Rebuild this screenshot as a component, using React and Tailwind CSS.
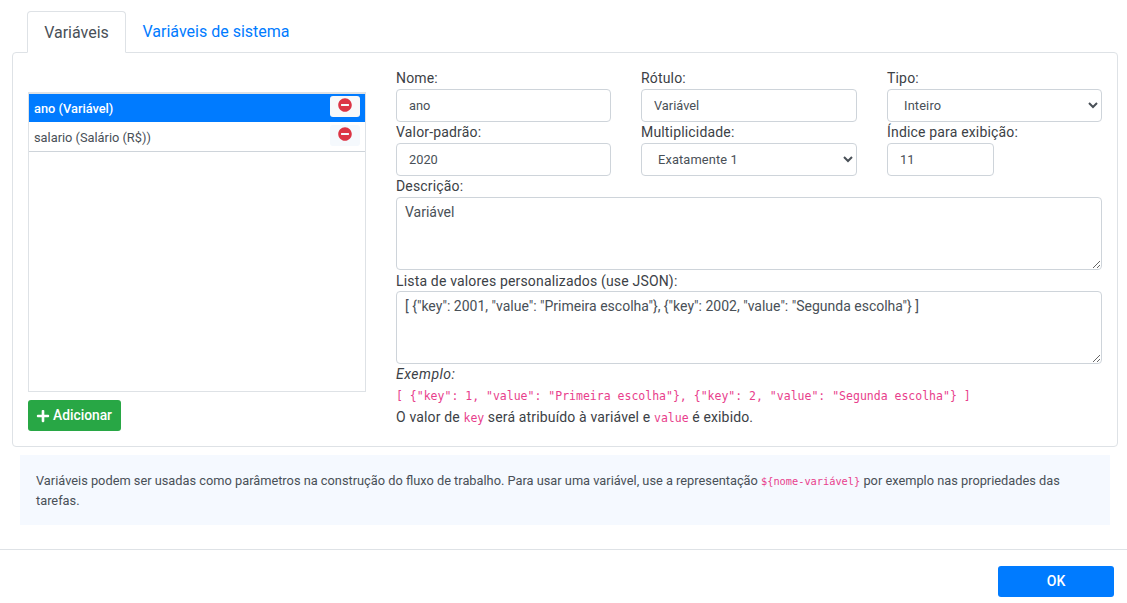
import React from "react";
import { FaMinusCircle, FaPlus } from "react-icons/fa";

const labelCls = "block h-[21px] text-[14px] leading-[21px] tracking-[0.17px] text-[#3c4146]";
const inputCls = "block w-full h-[33px] border border-[#ced4da] rounded-[4px] bg-white pl-[12px] pr-2 text-[12.8px] text-[#495057] outline-none";
const selectCls = "block w-full h-[33px] border border-[#ced4da] rounded-[4px] bg-white pl-3 pr-1 text-[12.8px] tracking-[0.15px] text-[#495057] outline-none";
const taCls = "block w-full h-[73px] border border-[#ced4da] rounded-[4px] bg-white px-2 py-[4px] text-[14px] leading-[21px] text-[#495057] outline-none resize-y";
const mono = "font-['DejaVu_Sans_Mono',monospace] text-[11.5px] tracking-normal text-[#e83e8c]";

function Row({ text, active }) {
  return (
    <div className={`flex items-start justify-between pl-[5px] pr-[5px] ${active ? "h-[28px] bg-[#007bff] text-white font-medium" : "h-[29px] text-[#495057]"}`}>
      <span className={`text-[12.8px] ${active ? "leading-[30px]" : "leading-[32px]"}`}>{text}</span>
      <span className={`flex justify-center w-[30px] h-[21px] rounded-[3px] pt-[2px] ${active ? "mt-[2px] bg-[#f8f9fa]" : "mt-[3px] bg-[#f5f9fd]"}`}>
        <FaMinusCircle className="text-[#dc3545] text-[14px]" />
      </span>
    </div>
  );
}

export default function App() {
  return (
    <div className="w-[1127px] h-[603px] bg-white font-['Roboto',sans-serif] text-[#3c4146] overflow-hidden pt-[11px]">
      <div className="flex pl-[27px] h-[42px] relative z-10">
        <div className="w-[99px] h-[42px] border border-[#dee2e6] border-b-white bg-white rounded-t-[4px] text-[#495057] text-[16px] leading-[42px] text-center">Variáveis</div>
        <div className="w-[180px] h-[42px] text-[#007bff] text-[16px] leading-[42px] text-center">Variáveis de sistema</div>
      </div>
      <div className="mx-[12px] -mt-[1px] h-[395px] w-[1106px] border border-[#dee2e6] rounded-[4px] flex pl-[15px] pr-[15px]">
        <div className="w-[338px] pt-[39px] shrink-0">
          <div className="h-[300px] border border-[#dee2e6] border-t-2">
            <div className="border-b border-[#ced4da] h-[58px]">
              <Row text="ano (Variável)" active />
              <Row text="salario (Salário (R$))" />
            </div>
          </div>
          <button className="mt-[8px] flex items-center gap-[3px] h-[31px] w-[93px] bg-[#28a745] rounded-[3px] text-white text-[13.8px] font-medium pl-[8px]">
            <FaPlus className="text-[14px]" />
            <span className="leading-none">Adicionar</span>
          </button>
        </div>
        <div className="ml-[30px] w-[706px] pt-[15px]">
          <div className="grid grid-cols-[215px_216px_215px] gap-x-[30px]">
            <div>
              <label className={labelCls}>Nome:</label>
              <input className={inputCls} defaultValue="ano" />
            </div>
            <div>
              <label className={labelCls}>Rótulo:</label>
              <input className={inputCls} defaultValue="Variável" />
            </div>
            <div>
              <label className={labelCls}>Tipo:</label>
              <select className={selectCls} defaultValue="Inteiro"><option>Inteiro</option></select>
            </div>
            <div>
              <label className={labelCls}>Valor-padrão:</label>
              <input className={inputCls} defaultValue="2020" />
            </div>
            <div>
              <label className={labelCls}>Multiplicidade:</label>
              <select className={selectCls} defaultValue="Exatamente 1"><option>Exatamente 1</option></select>
            </div>
            <div>
              <label className={labelCls}>Índice para exibição:</label>
              <input className={`${inputCls} !w-[107px]`} defaultValue="11" />
            </div>
          </div>
          <label className={labelCls}>Descrição:</label>
          <textarea className={taCls} defaultValue="Variável" />
          <label className={`${labelCls} !leading-[23px]`}>Lista de valores personalizados (use JSON):</label>
          <textarea className={taCls} defaultValue={'[ {"key": 2001, "value": "Primeira escolha"}, {"key": 2002, "value": "Segunda escolha"} ]'} />
          <div className="h-[21px] text-[14px] leading-[21px] italic tracking-[0.5px]">Exemplo:</div>
          <div className={`${mono} h-[22px] leading-[22px]`}>{'[ {"key": 1, "value": "Primeira escolha"}, {"key": 2, "value": "Segunda escolha"} ]'}</div>
          <div className="h-[21px] text-[14px] leading-[21px] tracking-[0.15px]">
            O valor de <code className={mono}>key</code> será atribuído à variável e <code className={mono}>value</code> é exibido.
          </div>
        </div>
      </div>
      <div className="ml-[20px] mt-[8px] w-[1090px] h-[70px] bg-[#f5f9ff] px-[16px] pt-[16px] text-[12.8px] leading-[20px] text-[#495057]">
        Variáveis podem ser usadas como parâmetros na construção do fluxo de trabalho. Para usar uma variável, use a representação <code className="font-['DejaVu_Sans_Mono',monospace] text-[10.3px] text-[#e83e8c]">{"${nome-variável}"}</code> por exemplo nas propriedades das tarefas.
      </div>
      <div className="mt-[24px] border-t border-[#dee2e6] pt-[16px] pr-[13px] flex justify-end">
        <button className="w-[116px] h-[31px] bg-[#007bff] rounded-[3px] text-white text-[14px] font-medium">OK</button>
      </div>
    </div>
  );
}
